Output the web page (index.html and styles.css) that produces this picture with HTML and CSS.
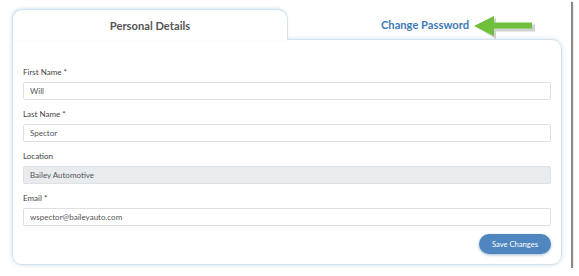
FILE: index.html
```html
<!DOCTYPE html>
<html lang="en">
<head>
    <meta charset="UTF-8">
    <title>Profile</title>
    <link rel="stylesheet" href="styles.css">
</head>
<body>
    <div class="frame">
        <div class="card">
            <div class="tabs">
                <div class="tab active">Personal Details</div>
                <div class="tab other">
                    <span class="tablink">Change Password
                        <svg class="arrow" width="64" height="26" viewBox="0 0 64 26">
                            <path d="M3 11 L21 1 L21 7.5 L60 7.5 L60 14.5 L21 14.5 L21 22 Z" fill="#999" opacity="0.45" transform="translate(2,2)"/>
                            <path d="M1 11 L21 1 L21 7.5 L59 7.5 L59 13.5 L21 13.5 L21 21 Z" fill="#6fc13b"/>
                        </svg>
                    </span>
                </div>
            </div>
            <div class="panel">
                <div class="field">
                    <div class="label">First Name *</div>
                    <input class="input" type="text" value="Will">
                </div>
                <div class="field">
                    <div class="label">Last Name *</div>
                    <input class="input" type="text" value="Spector">
                </div>
                <div class="field">
                    <div class="label">Location</div>
                    <input class="input disabled" type="text" value="Bailey Automotive" disabled>
                </div>
                <div class="field">
                    <div class="label">Email *</div>
                    <input class="input" type="text" value="wspector@baileyauto.com">
                </div>
                <div class="actions">
                    <button class="button">Save Changes</button>
                </div>
            </div>
        </div>
    </div>
</body>
</html>
```

FILE: styles.css
```css
body {
    margin: 0;
    background-color: white;
    font-family: Lato, "Open Sans", sans-serif;
}
.frame {
    width: 571px;
    height: 268px;
    background-color: white;
    box-shadow: 2px 2px 1px #8a8a8a;
    padding: 9px 0 0 12px;
    box-sizing: border-box;
}
.card {
    width: 550px;
}
.tabs {
    display: flex;
    height: 30px;
}
.tab {
    display: flex;
    align-items: center;
    justify-content: center;
    font-size: 11.2px;
    font-weight: bold;
}
.tab.active {
    width: 276px;
    box-sizing: border-box;
    border: 1px solid #d3e2ef;
    border-bottom: none;
    border-radius: 10px 10px 0 0;
    background-color: white;
    color: #555;
    position: relative;
    z-index: 1;
    height: 31px;
    padding-top: 1px;
    box-shadow: -1px -1px 3px rgba(150, 185, 215, 0.35);
}
.tab.other {
    flex: 1;
}
.tablink {
    color: #3d79b6;
    position: relative;
}
.arrow {
    position: absolute;
    left: 100%;
    margin-left: 4px;
    top: -3px;
}
.panel {
    border: 1px solid #d3e2ef;
    border-radius: 0 10px 10px 10px;
    box-shadow: 0 0 4px rgba(150, 185, 215, 0.45);
    padding: 26px 10px 11px 10px;
    height: 226px;
    box-sizing: border-box;
}
.field {
    margin-bottom: 8px;
}
.label {
    font-size: 8px;
    line-height: 12px;
    color: #444;
    margin-bottom: 4px;
}
.input {
    display: block;
    width: 100%;
    height: 18px;
    box-sizing: border-box;
    border: 1px solid #dde1e5;
    border-radius: 2px;
    padding: 0 6px;
    font-family: inherit;
    font-size: 8px;
    color: #555;
    background-color: white;
}
.input.disabled {
    background-color: #e9ecef;
    color: #555;
}
.actions {
    display: flex;
    justify-content: flex-end;
}
.button {
    width: 72px;
    height: 20px;
    border: none;
    border-radius: 10px;
    background-color: #4f86bf;
    color: white;
    font-family: inherit;
    font-size: 7.6px;
    padding: 0;
    box-shadow: 0 1px 3px rgba(80, 120, 170, 0.5);
}
```
